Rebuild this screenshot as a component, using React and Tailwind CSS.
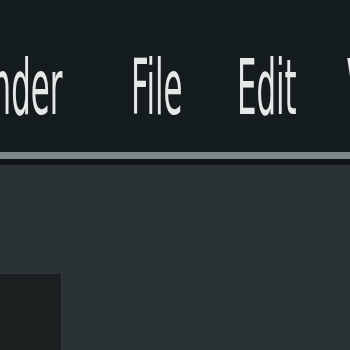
export default function App() {
  const txt =
    "block whitespace-nowrap font-['DejaVu_Sans',sans-serif] text-[77px] leading-none text-[#e6e8e8] font-normal";
  return (
    <div className="w-[350px] h-[350px] overflow-hidden bg-[#2b3233] flex flex-col">
      <div className="h-[152px] shrink-0 bg-[#151c1e] flex pt-[49px] overflow-hidden">
        <div className="w-[62px] shrink-0 flex justify-end">
          <span className={`${txt} origin-right scale-x-[0.4]`}>Blender</span>
        </div>
        <div className="ml-[69px] w-[52px] shrink-0">
          <span className={`${txt} origin-left scale-x-[0.4]`}>File</span>
        </div>
        <div className="ml-[54px] w-[60px] shrink-0">
          <span className={`${txt} origin-left scale-x-[0.4]`}>Edit</span>
        </div>
        <div className="ml-[50px] w-[60px] shrink-0">
          <span className={`${txt} origin-left scale-x-[0.4]`}>View</span>
        </div>
      </div>
      <div className="h-[7px] shrink-0 bg-[#7d8a8a]" />
      <div className="h-[6px] shrink-0 bg-[#0f1516]" />
      <div className="flex-1 flex flex-col justify-end">
        <div className="w-[62px] h-[77px] bg-[#1b1f20] border-t border-r border-[#2f3536]" />
      </div>
    </div>
  );
}
